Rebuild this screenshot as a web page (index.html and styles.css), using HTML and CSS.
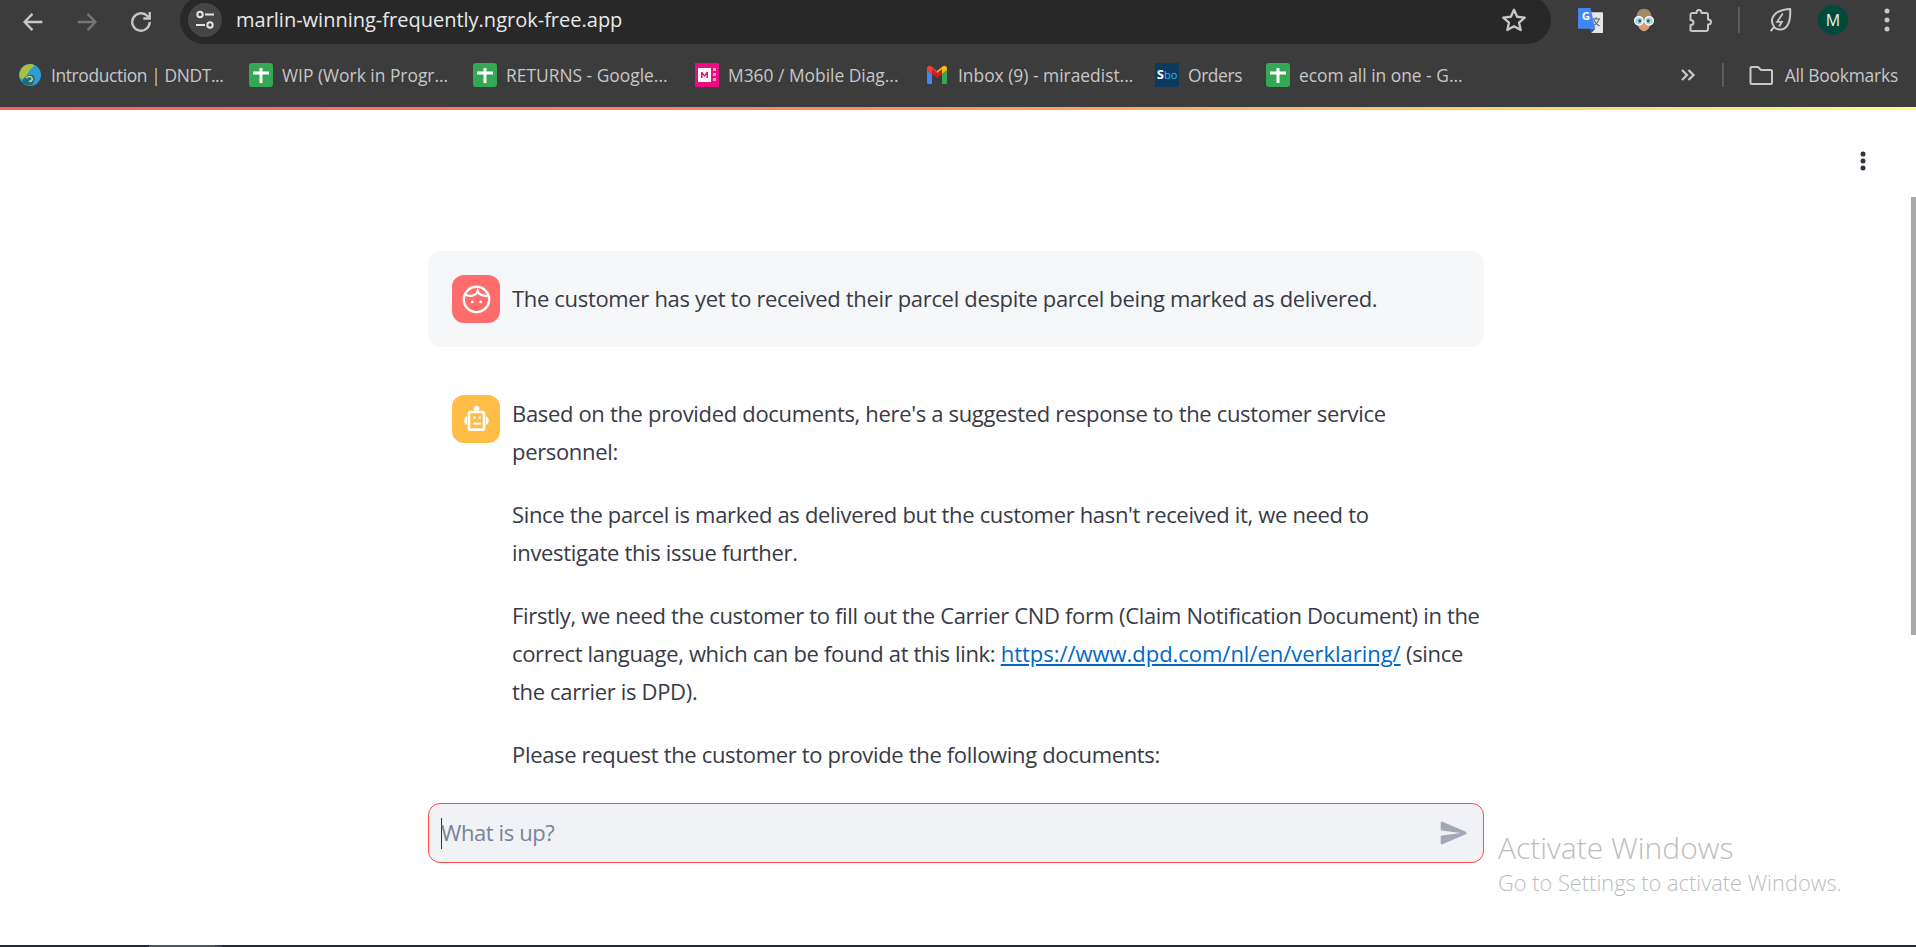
FILE: index.html
```html
<!DOCTYPE html>
<html lang="en">
<head>
<meta charset="utf-8">
<title>marlin-winning-frequently.ngrok-free.app</title>
<link rel="stylesheet" href="styles.css">
</head>
<body>
<svg class="defs" width="0" height="0" aria-hidden="true">
  <symbol id="sheet" viewBox="0 0 24 24">
    <rect width="24" height="24" rx="3" fill="#34a853"/>
    <path d="M10.5 5h3v3.5H20v3h-6.500V20h-3v-8.500H4v-3h6.500z" fill="#fff"/>
  </symbol>
</svg>
<div class="app">
  <header class="chrome">
    <div class="toolbar">
      <div class="nav">
        <svg class="ic" viewBox="0 0 24 24"><path d="M20 12H5M11.500 5L4.800 12l6.700 7" fill="none" stroke="#c7c7c7" stroke-width="2"/></svg>
        <svg class="ic" viewBox="0 0 24 24"><path d="M4 12h15M12.500 5l6.700 7-6.700 7" fill="none" stroke="#757575" stroke-width="2"/></svg>
        <svg class="ic" viewBox="0 0 24 24"><path d="M19.500 12a7.500 7.500 0 1 1-2.200-5.300L19.500 9M19.500 3.500V9H14" fill="none" stroke="#c7c7c7" stroke-width="2"/></svg>
      </div>
      <div class="omnibox">
        <span class="tune">
          <svg viewBox="0 0 24 24" width="24" height="24"><circle cx="7" cy="6.500" r="2.700" fill="none" stroke="#e3e3e3" stroke-width="2"/><path d="M12 6.500h9M3 17h9" stroke="#e3e3e3" stroke-width="2"/><circle cx="17" cy="17" r="2.700" fill="none" stroke="#e3e3e3" stroke-width="2"/></svg>
        </span>
        <span class="url">marlin-winning-frequently.ngrok-free.app</span>
        <svg class="star" viewBox="0 0 24 24"><path d="M12 3.200l2.700 6 6.500.7-4.900 4.300 1.400 6.400-5.700-3.300-5.700 3.300 1.400-6.400-4.900-4.300 6.500-.7z" fill="none" stroke="#c7c7c7" stroke-width="2" stroke-linejoin="round"/></svg>
      </div>
      <div class="extensions">
        <svg class="ext translate" viewBox="0 0 26 30" preserveAspectRatio="none">
          <path d="M10 5h15a1 1 0 0 1 1 1v23a1 1 0 0 1-1 1H14z" fill="#e6e6e6"/>
          <path d="M15 13h8M19 11v2M22 13c-1 4-3.500 7-7 8.500M16.500 14c1 3 3 6 6 7.500" fill="none" stroke="#6d7378" stroke-width="1.300"/>
          <path d="M1 0h12l5 25H1a1 1 0 0 1-1-1V1a1 1 0 0 1 1-1z" fill="#4285f4"/>
          <path d="M13 25h5l-4 5z" fill="#2a56c6"/>
          <text x="4" y="14" class="gmark">G</text>
        </svg>
        <svg class="ext glasses" viewBox="0 0 24 28">
          <path d="M3 13C3 4 7 1 12 1s9 3 9 12z" fill="#a38a67"/>
          <path d="M4 14c0 8 4 13 8 13s8-5 8-13z" fill="#d99a72"/>
          <circle cx="6" cy="15" r="5" fill="#a8d5de" stroke="#fff" stroke-width="1.500"/>
          <circle cx="18" cy="15" r="5" fill="#a8d5de" stroke="#fff" stroke-width="1.500"/>
          <circle cx="7" cy="15" r="1.800" fill="#35606e"/>
          <circle cx="17" cy="15" r="1.800" fill="#35606e"/>
        </svg>
        <svg class="ext puzzle" viewBox="0 0 24 24"><path d="M4 5h4.500c0-2 .8-3 2.500-3s2.500 1 2.500 3H18a2 2 0 0 1 2 2v4.500c2 0 3 .8 3 2.500s-1 2.500-3 2.500V21a2 2 0 0 1-2 2H4a2 2 0 0 1-1.500-.7V17c2 0 3-1 3-2.500S4.500 12 2.500 12V7A2 2 0 0 1 4 5z" fill="none" stroke="#c7c7c7" stroke-width="2" stroke-linejoin="round"/></svg>
        <span class="vsep"></span>
        <svg class="ext leaf" viewBox="0 0 26 28"><path d="M3 26l4-5M7 22C1 14 5 3 24 2c1 15-4 24-13 22-2-.3-3.200-1-4-2z" fill="none" stroke="#c7c7c7" stroke-width="2.200" stroke-linejoin="round"/><path d="M16 7l-6 9h5l-3 5" fill="none" stroke="#c7c7c7" stroke-width="2"/></svg>
        <span class="avatar">M</span>
        <svg class="kebab-light" viewBox="0 0 8 28"><circle cx="4" cy="5" r="2.500"/><circle cx="4" cy="14" r="2.500"/><circle cx="4" cy="23" r="2.500"/></svg>
      </div>
    </div>
    <nav class="bookmarks">
      <a class="bm bm-intro">
        <svg class="fav" viewBox="0 0 24 24"><circle cx="12" cy="12" r="11" fill="#2f9bd3"/><path d="M12 1a11 11 0 0 0-10 14c3 2 6-1 8-5s5-5 6-8a11 11 0 0 0-4-1z" fill="#a9c23f"/><path d="M4 19c2-5 6-8 10-7s3 6 0 10c-4 1-8 0-10-3z" fill="#1d6d86"/><path d="M8 15c2-2 5-2 6 0s-1 4-3 3" fill="none" stroke="#e8d24a" stroke-width="1.500"/></svg>
        <span class="bm-label">Introduction | DNDT...</span>
      </a>
      <a class="bm bm-wip"><svg class="fav"><use href="#sheet"/></svg><span class="bm-label">WIP (Work in Progr...</span></a>
      <a class="bm bm-returns"><svg class="fav"><use href="#sheet"/></svg><span class="bm-label">RETURNS - Google...</span></a>
      <a class="bm bm-m360">
        <svg class="fav" viewBox="0 0 24 24"><rect width="24" height="24" fill="#ec0c7f"/><rect x="3" y="5" width="13" height="14" fill="#fff"/><path d="M6 15V9h1.500l2 3 2-3H13v6h-1.500v-3.500l-2 2.500-2-2.500V15z" fill="#ec0c7f"/><path d="M18 5h3v3h-3zM18 10h3v3h-3zM18 15h3v3h-3z" fill="#f5a0c8"/></svg>
        <span class="bm-label">M360 / Mobile Diag...</span>
      </a>
      <a class="bm bm-inbox">
        <svg class="fav" viewBox="0 0 24 24"><path d="M2 21V7l5 4v10H3.500A1.500 1.500 0 0 1 2 19.500z" fill="#4285f4"/><path d="M22 21V7l-5 4v10h3.500a1.500 1.500 0 0 0 1.500-1.500z" fill="#34a853"/><path d="M7 11L2 7V5.500C2 3.300 4.500 2 6.300 3.400L12 8l-0 5z" fill="#ea4335"/><path d="M17 11l5-4V5.500c0-2.200-2.500-3.500-4.300-2.100L12 8v5z" fill="#fbbc04"/><path d="M7 11l5 4 5-4V6l-5 4-5-4z" fill="#c5221f"/></svg>
        <span class="bm-label">Inbox (9) - miraedist...</span>
      </a>
      <a class="bm bm-orders">
        <span class="sbo"><b>S</b><i>bo</i></span>
        <span class="bm-label">Orders</span>
      </a>
      <a class="bm bm-ecom"><svg class="fav"><use href="#sheet"/></svg><span class="bm-label">ecom all in one - G...</span></a>
      <span class="bm-spacer"></span>
      <svg class="chev" viewBox="0 0 16 14"><path d="M2 2l5 5-5 5M8.500 2l5 5-5 5" fill="none" stroke="#c7c7c7" stroke-width="2.200"/></svg>
      <span class="bm-sep"></span>
      <a class="bm bm-all">
        <svg class="fav" viewBox="0 0 24 24"><path d="M1.500 5a1 1 0 0 1 1-1h6.500l3 3h10a1 1 0 0 1 1 1v12a1 1 0 0 1-1 1h-19.500a1 1 0 0 1-1-1z" fill="none" stroke="#c7c7c7" stroke-width="2"/></svg>
        <span class="bm-label">All Bookmarks</span>
      </a>
    </nav>
    <div class="rainbow"></div>
  </header>

  <main class="page">
    <div class="scroll">
      <section class="chat">
        <article class="msg msg-user">
          <span class="bubble bubble-user">
            <svg viewBox="0 0 24 24" width="29" height="29"><circle cx="12" cy="12" r="10.500" fill="none" stroke="#fff" stroke-width="2"/><path d="M3 8c3 2 9 1 10-3 1 3 4 4 8 4" fill="none" stroke="#fff" stroke-width="1.800"/><circle cx="8.500" cy="14" r="1.200" fill="#fff"/><circle cx="15.500" cy="14" r="1.200" fill="#fff"/></svg>
          </span>
          <div class="msg-body"><p>The customer has yet to received their parcel despite parcel being marked as delivered.</p></div>
        </article>
        <article class="msg msg-bot">
          <span class="bubble bubble-bot">
            <svg viewBox="0 0 28 28" width="29" height="29"><circle cx="14" cy="3.500" r="2.700" fill="#fff"/><rect x="5.500" y="5.500" width="17" height="19.500" rx="2" fill="#fff"/><rect x="8" y="8" width="12" height="14.500" fill="#ffbd45"/><rect x="11" y="11" width="2" height="2.400" fill="#fff"/><rect x="16" y="11" width="2" height="2.400" fill="#fff"/><rect x="10.500" y="17" width="8" height="2" fill="#fff"/><path d="M5 10.500a5 5 0 0 0 0 9zM23 10.500a5 5 0 0 1 0 9z" fill="#fff"/></svg>
          </span>
          <div class="msg-body">
            <p>Based on the provided documents, here's a suggested response to the customer service personnel:</p>
            <p>Since the parcel is marked as delivered but the customer hasn't received it, we need to<br>investigate this issue further.</p>
            <p>Firstly, we need the customer to fill out the Carrier CND form (Claim Notification Document) in the correct language, which can be found at this link: <a class="link" href="#">https://www.dpd.com/nl/en/verklaring/</a> (since the carrier is DPD).</p>
            <p>Please request the customer to provide the following documents:</p>
          </div>
        </article>
      </section>
    </div>
    <footer class="composer">
      <div class="input-box">
        <span class="caret"></span>
        <span class="placeholder">What is up?</span>
        <svg class="send" viewBox="0 0 24 24"><path d="M3.400 20.400l17.450-7.480a1 1 0 0 0 0-1.840L3.400 3.600a.993.993 0 0 0-1.390.91L2 9.120c0 .5.370.930.870.990L17 12 2.870 13.880c-.5.070-.870.5-.870 1l.010 4.610c0 .710.730 1.200 1.390.910z"/></svg>
      </div>
    </footer>
    <svg class="kebab" viewBox="0 0 6 20"><circle cx="3" cy="3" r="2.500"/><circle cx="3" cy="10" r="2.500"/><circle cx="3" cy="17" r="2.500"/></svg>
    <div class="scrollbar"></div>
    <div class="watermark">
      <div class="wm-title">Activate Windows</div>
      <div class="wm-sub">Go to Settings to activate Windows.</div>
    </div>
  </main>
  <div class="taskbar"><span class="tb-a"></span><span class="tb-b"></span><span class="tb-c"></span><span class="tb-d"></span></div>
</div>
</body>
</html>
```

FILE: styles.css
```css
* { box-sizing: border-box; }
html, body { margin: 0; height: 100%; overflow: hidden; background: #fff; }
.defs { position: absolute; }
.app { height: 947px; display: flex; flex-direction: column; font-family: "Open Sans", "Noto Sans", sans-serif; }

/* browser chrome */
.chrome { background: #3c3c3c; flex: none; }
.toolbar { height: 44px; display: flex; align-items: flex-start; }
.nav { display: flex; gap: 26px; padding: 8px 0 0 19px; width: 180px; flex: none; }
.ic { width: 28px; height: 28px; }
.omnibox { width: 1371px; height: 48px; margin-top: -4px; background: #282828; border-radius: 24px; display: flex; align-items: center; padding: 0 23px 0 8px; flex: none; }
.tune { width: 34px; height: 34px; border-radius: 50%; background: #454545; display: flex; align-items: center; justify-content: center; flex: none; }
.url { margin: -2px 0 0 14px; font-size: 20px; color: #e8e8e8; flex: 1; }
.star { width: 28px; height: 28px; }
.extensions { flex: 1; display: flex; align-items: center; height: 40px; position: relative; }
.ext, .avatar, .vsep, .kebab-light { flex: none; }
.translate { width: 25px; height: 25px; margin-left: 27px; }
.glasses { width: 22px; height: 24px; margin-left: 30px; }
.puzzle { width: 24px; height: 24px; margin-left: 33px; }
.vsep { width: 2px; height: 26px; background: #5b5b5b; margin-left: 26px; }
.leaf { width: 24px; height: 26px; margin-left: 28px; }
.avatar { width: 30px; height: 30px; border-radius: 50%; background: #004a3c; color: #e8f5f0; font-size: 16px; display: flex; align-items: center; justify-content: center; margin-left: 26px; }
.kebab-light { width: 8px; height: 28px; margin-left: 35px; fill: #c7c7c7; }
.gmark { font: 700 12px "Open Sans", sans-serif; fill: #fff; }

.bookmarks { height: 63px; display: flex; align-items: center; padding: 0 18px 2px 18px; }
.bm { display: flex; align-items: center; color: #c7c7c7; flex: none; }
.fav { width: 24px; height: 24px; flex: none; }
.bm-label { font-size: 17.400px; margin-left: 9px; white-space: nowrap; }
.bm-intro { width: 231px; }
.bm-intro .bm-label { letter-spacing: -.38px; }
.bm-wip { width: 224px; }
.bm-returns { width: 222px; }
.bm-m360 { width: 230px; }
.bm-inbox { width: 230px; }
.bm-orders { width: 111px; }
.bm-orders .bm-label { letter-spacing: -.4px; }
.bm-all .bm-label { letter-spacing: -.2px; margin-left: 12px; }
.bm-spacer { flex: 1; }
.sbo { width: 24px; height: 24px; background: #0b3a5e; display: flex; align-items: center; justify-content: center; font-size: 11px; font-style: normal; line-height: 1; }
.sbo b { color: #fff; font-size: 13px; }
.sbo i { color: #35b5e8; font-style: normal; }
.chev { width: 16px; height: 14px; margin-right: 26px; }
.bm-sep { width: 2px; height: 24px; background: #5b5b5b; margin-right: 25px; }
.rainbow { height: 3px; background: linear-gradient(90deg, #ff5c5c 0%, #ff8a62 45%, #ffbd6b 70%, #fffd80 100%); }

/* streamlit page */
.page { flex: 1; min-height: 0; display: flex; flex-direction: column; padding-right: 4px; position: relative; background: #fff; color: #383a46; }
.scroll { flex: 1; min-height: 0; overflow: hidden; padding-top: 141px; }
.chat { width: 1056px; margin: 0 auto; display: flex; flex-direction: column; gap: 24px; }
.msg { display: flex; gap: 12px; padding: 24px; border-radius: 12px; }
.msg-user { background: #f6f7f9; align-items: center; }
.msg-user .msg-body { margin-top: -2px; }
.msg-bot { padding-right: 0; }
.bubble { width: 48px; height: 48px; border-radius: 12px; display: flex; align-items: center; justify-content: center; flex: none; }
.bubble-user { background: #ff6c6c; }
.bubble-bot { background: #ffbd45; }
.msg-body { flex: 1; font-size: 22px; line-height: 38.400px; letter-spacing: -.33px; }
.msg-body p { margin: 0 0 24px; }
.msg-body p:last-child { margin-bottom: 0; }
.msg-bot .msg-body { margin-top: -1px; }
.link { color: #0068c9; letter-spacing: -.03px; }

.composer { flex: none; height: 142px; }
.input-box { width: 1056px; height: 60px; margin: 0 auto; background: #f0f2f6; border: 1px solid #ff4b4b; border-radius: 12px; display: flex; align-items: center; padding: 0 13px 0 12px; position: relative; }
.caret { width: 1px; height: 31px; background: #31333f; flex: none; }
.placeholder { font-size: 22px; letter-spacing: -.4px; color: #7c8296; flex: 1; margin: -2px 0 0 -1px; }
.send { width: 32px; height: 32px; fill: #a3a8b8; flex: none; }

.kebab { position: absolute; left: 1860px; top: 41px; width: 6px; height: 20px; fill: #31333f; }
.scrollbar { position: absolute; right: 0; top: 87px; width: 5px; height: 438px; background: #a8a8a8; }
.watermark { position: absolute; left: 1498px; top: 718px; color: #bdbdbd; font-weight: 300; white-space: nowrap; }
.wm-title { font-size: 30px; line-height: 40px; }
.wm-sub { font-size: 21.800px; line-height: 30px; }

.taskbar { height: 2px; display: flex; flex: none; background: #1b2a33; }
.tb-a { width: 149px; }
.tb-b { width: 66px; background: #4a5558; }
.tb-c { width: 7px; background: #39454b; }
```
